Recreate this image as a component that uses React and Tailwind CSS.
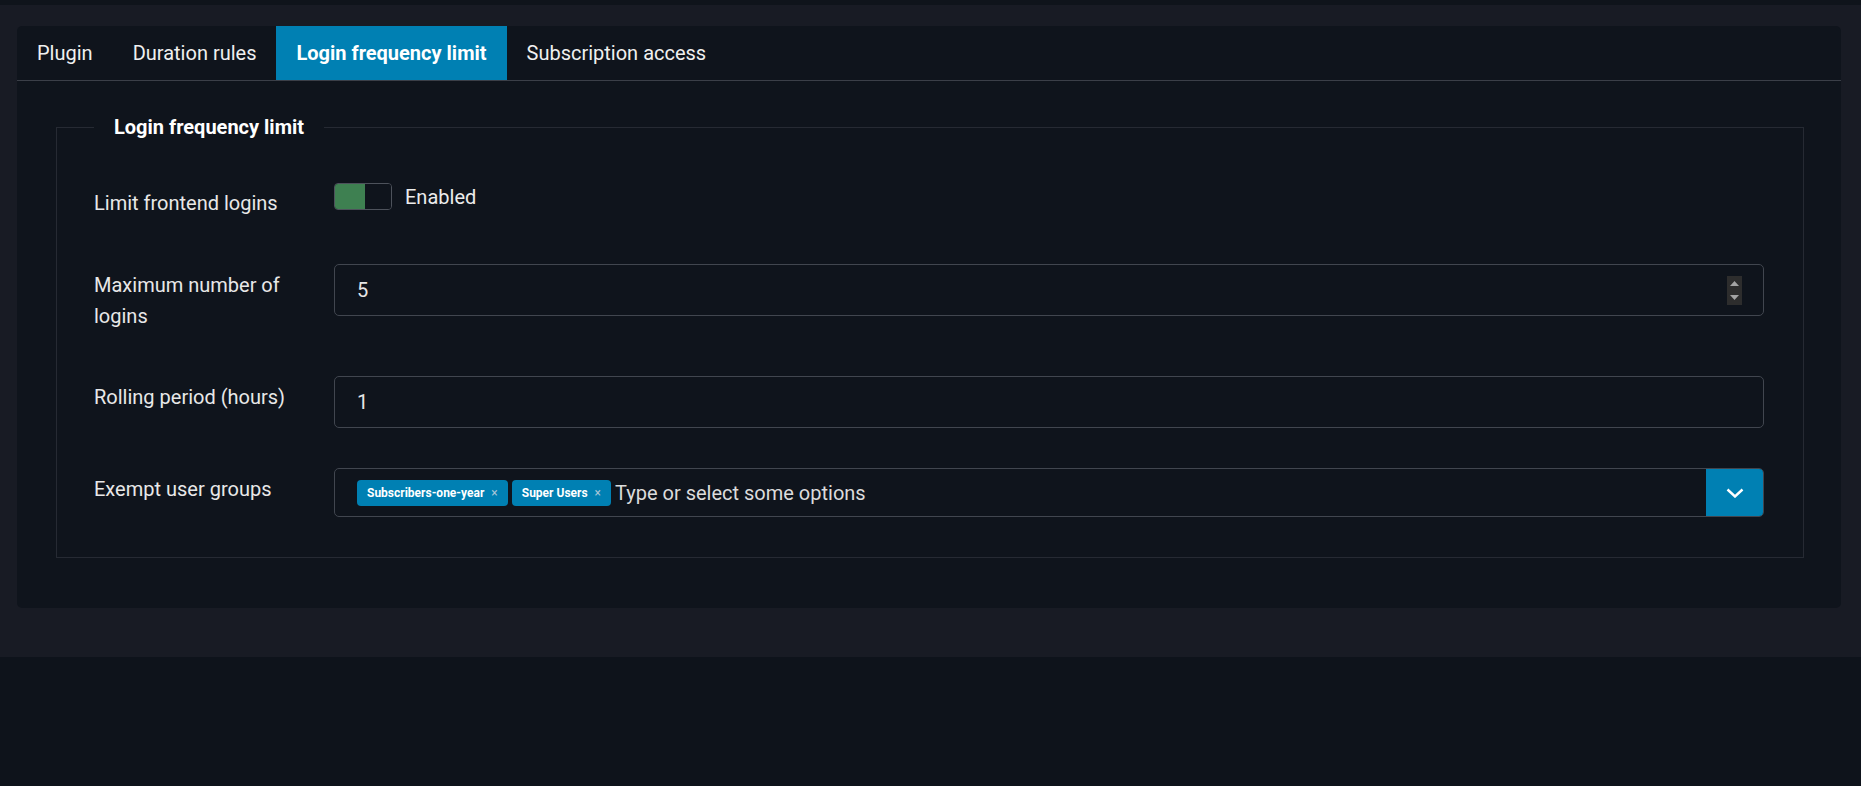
import React from 'react';

const tabs = ['Plugin', 'Duration rules', 'Login frequency limit', 'Subscription access'];

const Chip = ({ label }) => (
  <span className="flex h-[26px] items-center rounded-[4px] bg-[#0080b3] pl-[10px] pr-[10px] text-[12px] font-bold text-white">
    {label}
    <span className="ml-[7px] text-[12px] font-normal text-[#a9c6d8]">×</span>
  </span>
);

const Row = ({ label, className = '', children }) => (
  <div className={`flex items-start ${className}`}>
    <div className="w-[240px] shrink-0 pt-[6px] pr-4 leading-[31px] text-[#e8e8e8]">{label}</div>
    <div className="flex-1">{children}</div>
  </div>
);

const App = () => {
  return (
    <div
      className="min-h-[786px] bg-[#0e131b] text-[20px]"
      style={{ fontFamily: 'Roboto, "Noto Sans", sans-serif' }}
    >
      <div className="h-[5px] bg-[#0f141b]" />
      <div className="h-[652px] bg-[#181b24] pt-[21px] pl-[17px] pr-[20px]">
        <div className="h-[582px] rounded-[5px] bg-[#0f141c]">
          {/* tabs */}
          <ul className="flex border-b border-[#3b3f48]">
            {tabs.map((tab) => (
              <li
                key={tab}
                className={
                  tab === 'Login frequency limit'
                    ? 'flex h-[54px] items-center bg-[#0080b3] px-5 font-bold text-white'
                    : 'flex h-[54px] items-center px-5 text-[#f0f0f0]'
                }
              >
                {tab}
              </li>
            ))}
          </ul>

          <div className="pt-[31px] pl-[39px] pr-[37px] pb-[50px]">
            <fieldset className="border border-[#262a33] pl-[37px] pr-[39px] pb-[40px]">
              <legend className="px-5 font-bold leading-[31px] text-white">Login frequency limit</legend>

              <Row label="Limit frontend logins" className="mt-[39px]">
                <div className="flex items-center">
                  <div className="flex h-[27px] w-[58px] overflow-hidden rounded-[4px] border border-[#4d525b]">
                    <div className="w-[30px] bg-[#3e8051]" />
                    <div className="flex-1 bg-[#0f141c]" />
                  </div>
                  <span className="ml-[13px] mt-[2px] leading-[27px] text-[#ececec]">Enabled</span>
                </div>
              </Row>

              <Row label="Maximum number of logins" className="mt-[45px]">
                <div className="flex h-[52px] items-center justify-between rounded-[5px] border border-[#41464f] pl-[22px] pr-[21px] text-[#e6e6e6]">
                  <span>5</span>
                  <div className="flex h-[29px] w-[15px] flex-col items-center justify-between bg-[#2d2d2d] py-[5px]">
                    <svg width="9" height="5" viewBox="0 0 9 5">
                      <polygon points="4.5,0 9,5 0,5" fill="#a3a3a3" />
                    </svg>
                    <svg width="9" height="5" viewBox="0 0 9 5">
                      <polygon points="0,0 9,0 4.5,5" fill="#a3a3a3" />
                    </svg>
                  </div>
                </div>
              </Row>

              <Row label="Rolling period (hours)" className="mt-[44px]">
                <div className="flex h-[52px] items-center rounded-[5px] border border-[#41464f] pl-[22px] text-[#e6e6e6]">
                  <span>1</span>
                </div>
              </Row>

              <Row label="Exempt user groups" className="mt-[40px]">
                <div className="flex h-[49px] rounded-[5px] border border-[#41464f]">
                  <div className="flex flex-1 items-center gap-[4px] pl-[22px]">
                    <Chip label="Subscribers-one-year" />
                    <Chip label="Super Users" />
                    <span className="text-[#dcdcdc]">Type or select some options</span>
                  </div>
                  <div className="flex w-[57px] items-center justify-center rounded-r-[4px] bg-[#0080b3]">
                    <svg width="18" height="10" viewBox="0 0 18 10">
                      <polyline points="1.5,1.5 9,8.5 16.5,1.5" fill="none" stroke="#ffffff" strokeWidth="2.4" />
                    </svg>
                  </div>
                </div>
              </Row>
            </fieldset>
          </div>
        </div>
      </div>
    </div>
  );
};

export default App;
